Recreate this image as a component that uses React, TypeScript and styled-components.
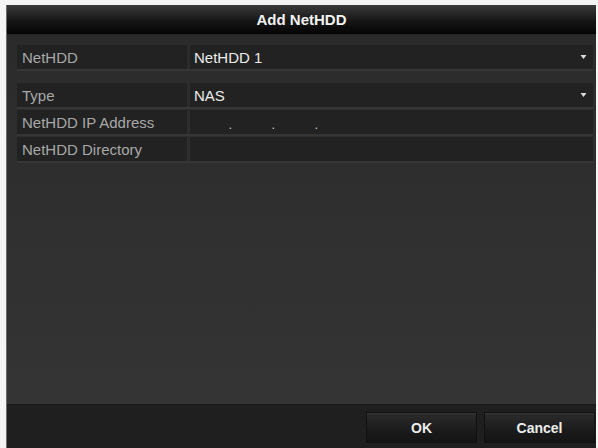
import React from "react";
import styled, { createGlobalStyle } from "styled-components";

const GlobalStyle = createGlobalStyle`
  html, body {
    margin: 0;
    padding: 0;
    background: #f4f4f4;
  }
  body {
    font-family: "Liberation Sans", Arial, sans-serif;
  }
`;

const Window = styled.div`
  margin: 5px 2px 0 6px;
  width: 590px;
  height: 443px;
  display: flex;
  flex-direction: column;
  background: #2c2c2c;
  border-left: 1px solid #6a6a6a;
  box-sizing: border-box;
`;

const TitleBar = styled.div`
  height: 29px;
  display: flex;
  align-items: center;
  justify-content: center;
  background: linear-gradient(#3a3a3a 0%, #161616 55%, #040404 100%);
  color: #f2f2f2;
  font-size: 15px;
  font-weight: bold;
  border-bottom: 1px solid #262626;
`;

const Body = styled.div`
  flex: 1;
  padding: 10px 3px 0 10px;
  background: linear-gradient(#2b2b2b, #343434);
  display: flex;
  flex-direction: column;
`;

const Row = styled.div<{ $spaceAfter?: number }>`
  display: grid;
  grid-template-columns: 170px 1fr;
  column-gap: 3px;
  height: 24px;
  margin-bottom: ${({ $spaceAfter }) => $spaceAfter ?? 3}px;
  box-shadow: 0 2px 0 #363636;
`;

const Cell = styled.div`
  background: #222222;
  display: flex;
  align-items: center;
  padding: 0 5px;
  font-size: 15px;
  position: relative;
`;

const Label = styled(Cell)`
  color: #a8a8a8;
`;

const Value = styled(Cell)`
  color: #ececec;
  padding-left: 4px;
`;

const Arrow = styled.svg`
  position: absolute;
  right: 6px;
  top: 9px;
`;

const IpField = styled.div`
  display: flex;
  padding-left: 0;
`;

const IpSegment = styled.span<{ $w: number }>`
  width: ${({ $w }) => $w}px;
  text-align: right;
  color: #cfcfcf;
  font-size: 13px;
  line-height: 1;
  padding-top: 4px;
`;

const Footer = styled.div`
  height: 44px;
  background: #1f1f1f;
  border-top: 1px solid #1a1a1a;
  display: flex;
  justify-content: flex-end;
  align-items: flex-start;
  gap: 7px;
  padding: 7px 1px 0 0;
  box-sizing: border-box;
`;

const Button = styled.button`
  width: 111px;
  height: 31px;
  background: linear-gradient(#2c2c2c, #1b1b1b 60%, #141414);
  border: 1px solid #101010;
  box-shadow: inset 0 1px 0 #353535;
  color: #ededed;
  font-family: "Liberation Sans", Arial, sans-serif;
  font-size: 14px;
  font-weight: bold;
  padding: 0;
`;

const DropArrow = () => (
  <Arrow width="7" height="6" viewBox="0 0 7 6">
    <path d="M0.5 1 L3.5 5 L6.5 1 Z" fill="#dcdcdc" />
  </Arrow>
);

export default function App() {
  return (
    <>
      <GlobalStyle />
      <Window>
        <TitleBar>Add NetHDD</TitleBar>
        <Body>
          <Row $spaceAfter={14}>
            <Label>NetHDD</Label>
            <Value>
              NetHDD 1
              <DropArrow />
            </Value>
          </Row>
          <Row>
            <Label>Type</Label>
            <Value>
              NAS
              <DropArrow />
            </Value>
          </Row>
          <Row>
            <Label>NetHDD IP Address</Label>
            <Value>
              <IpField>
                {[38, 43, 43].map((w, i) => (
                  <IpSegment key={i} $w={w}>
                    .
                  </IpSegment>
                ))}
              </IpField>
            </Value>
          </Row>
          <Row>
            <Label>NetHDD Directory</Label>
            <Value />
          </Row>
        </Body>
        <Footer>
          <Button>OK</Button>
          <Button>Cancel</Button>
        </Footer>
      </Window>
    </>
  );
}
